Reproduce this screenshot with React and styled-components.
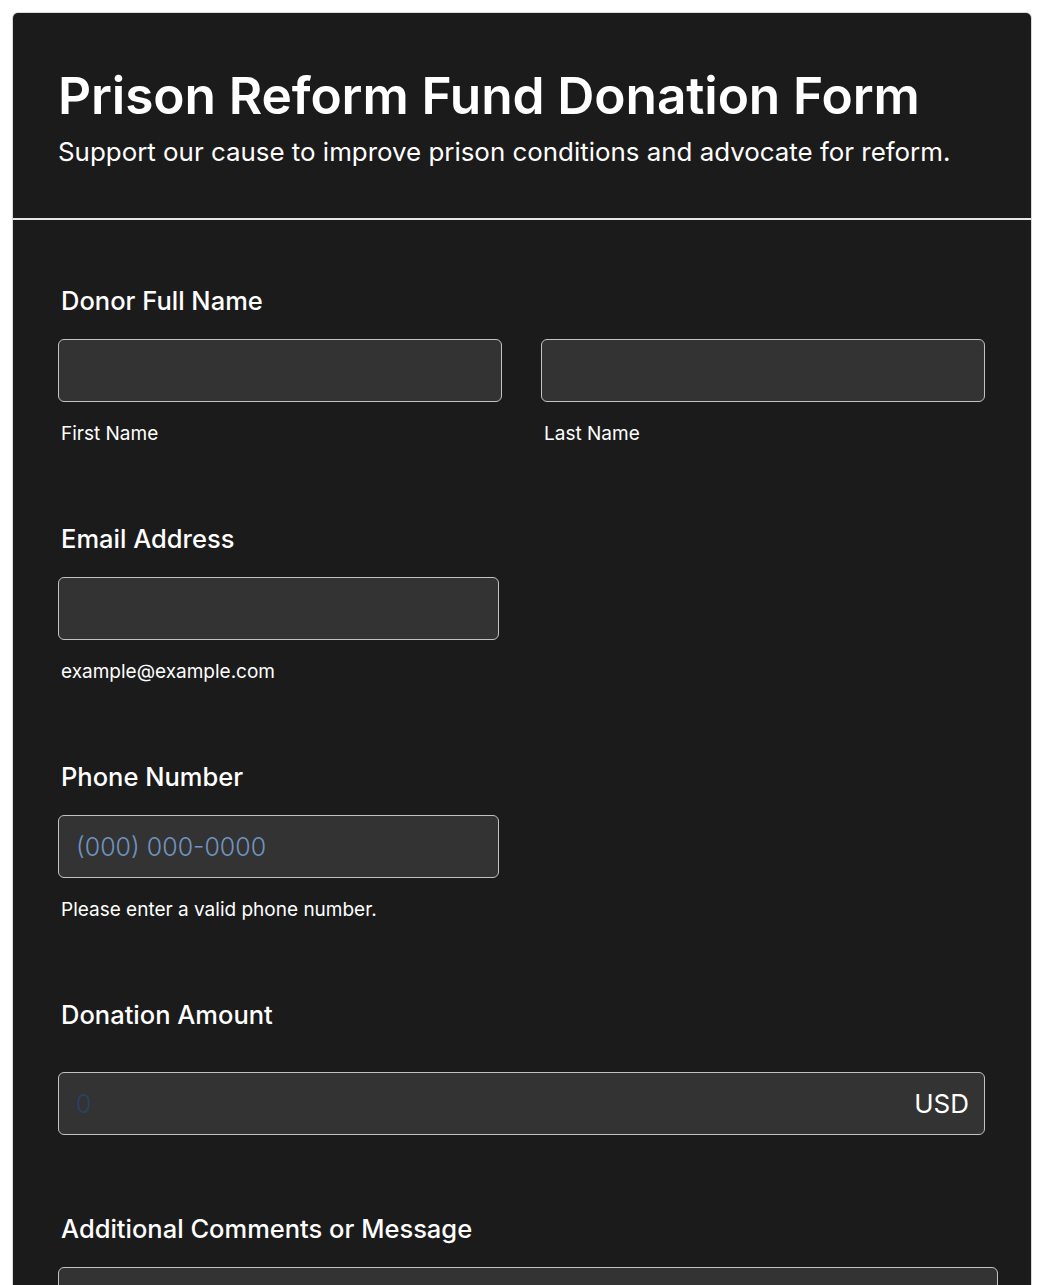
import React from "react";
import styled, { createGlobalStyle } from "styled-components";

const GlobalStyle = createGlobalStyle`
  html, body {
    margin: 0;
    padding: 0;
    background: #ffffff;
    font-family: Inter, "Noto Sans", sans-serif;
  }
  * {
    box-sizing: border-box;
  }
`;

const Page = styled.div`
  padding: 13px 13px 0 13px;
`;

const Card = styled.div`
  background: #1b1b1b;
  border-radius: 5px 5px 0 0;
  box-shadow: 0 0 0 1px #d8d8d8;
  color: #ffffff;
  min-height: 1272px;
`;

const Header = styled.header`
  padding: 52px 45px 50px 45px;
  border-bottom: 2px solid #e6e6e6;
`;

const Title = styled.h1`
  margin: 0;
  font-size: 51.4px;
  line-height: 60px;
  font-weight: 600;
  letter-spacing: -0.1px;
`;

const Subtitle = styled.p`
  margin: 11px 0 0 0;
  font-size: 25.9px;
  line-height: 32px;
  font-weight: 400;
`;

const Body = styled.div`
  padding: 66px 46px 0 45px;
  display: flex;
  flex-direction: column;
  gap: 79px;
`;

const Section = styled.section`
  display: flex;
  flex-direction: column;
`;

const Label = styled.label`
  padding-left: 3px;
  font-size: 25.5px;
  line-height: 30px;
  font-weight: 500;
  margin-bottom: ${(p) => (p.$gap ? p.$gap : 23)}px;
`;

const Row = styled.div`
  display: grid;
  grid-template-columns: ${(p) => (p.$half ? "441px" : "1fr 1fr")};
  gap: 39px;
`;

const Field = styled.div`
  display: flex;
  flex-direction: column;
`;

const Input = styled.input`
  height: 63px;
  width: 100%;
  background: #333333;
  border: 1.5px solid #c2c2c2;
  border-radius: 6px;
  padding: 0 17px;
  color: #ffffff;
  font-family: Inter, "Noto Sans", sans-serif;
  font-size: 25px;
  font-weight: 400;
  outline: none;
  &::placeholder {
    color: ${(p) => (p.$faint ? "#2c4068" : "#6f93c0")};
    font-weight: 300;
  }
`;

const Sub = styled.span`
  padding-left: 3px;
  margin-top: 21px;
  font-size: 19px;
  line-height: 22px;
`;

const AmountBox = styled.div`
  position: relative;
  display: flex;
  align-items: center;
`;

const Currency = styled.span`
  position: absolute;
  right: 16px;
  font-size: 26px;
  color: #ffffff;
  pointer-events: none;
`;

const TextArea = styled.textarea`
  width: calc(100% + 13px);
  height: 140px;
  background: #333333;
  border: 1.5px solid #c2c2c2;
  border-radius: 6px;
  resize: none;
  padding: 14px 17px;
  color: #ffffff;
  font-family: Inter, "Noto Sans", sans-serif;
  font-size: 22px;
  outline: none;
`;

export default function App() {
  return (
    <Page>
      <GlobalStyle />
      <Card>
        <Header>
          <Title>Prison Reform Fund Donation Form</Title>
          <Subtitle>Support our cause to improve prison conditions and advocate for reform.</Subtitle>
        </Header>
        <Body>
          <Section>
            <Label>Donor Full Name</Label>
            <Row>
              <Field>
                <Input type="text" />
                <Sub>First Name</Sub>
              </Field>
              <Field>
                <Input type="text" />
                <Sub>Last Name</Sub>
              </Field>
            </Row>
          </Section>

          <Section>
            <Label>Email Address</Label>
            <Row $half>
              <Field>
                <Input type="email" />
                <Sub>example@example.com</Sub>
              </Field>
            </Row>
          </Section>

          <Section>
            <Label>Phone Number</Label>
            <Row $half>
              <Field>
                <Input type="tel" placeholder="(000) 000-0000" />
                <Sub>Please enter a valid phone number.</Sub>
              </Field>
            </Row>
          </Section>

          <Section>
            <Label $gap={42}>Donation Amount</Label>
            <AmountBox>
              <Input type="text" placeholder="0" $faint />
              <Currency>USD</Currency>
            </AmountBox>
          </Section>

          <Section>
            <Label>Additional Comments or Message</Label>
            <TextArea />
          </Section>
        </Body>
      </Card>
    </Page>
  );
}
